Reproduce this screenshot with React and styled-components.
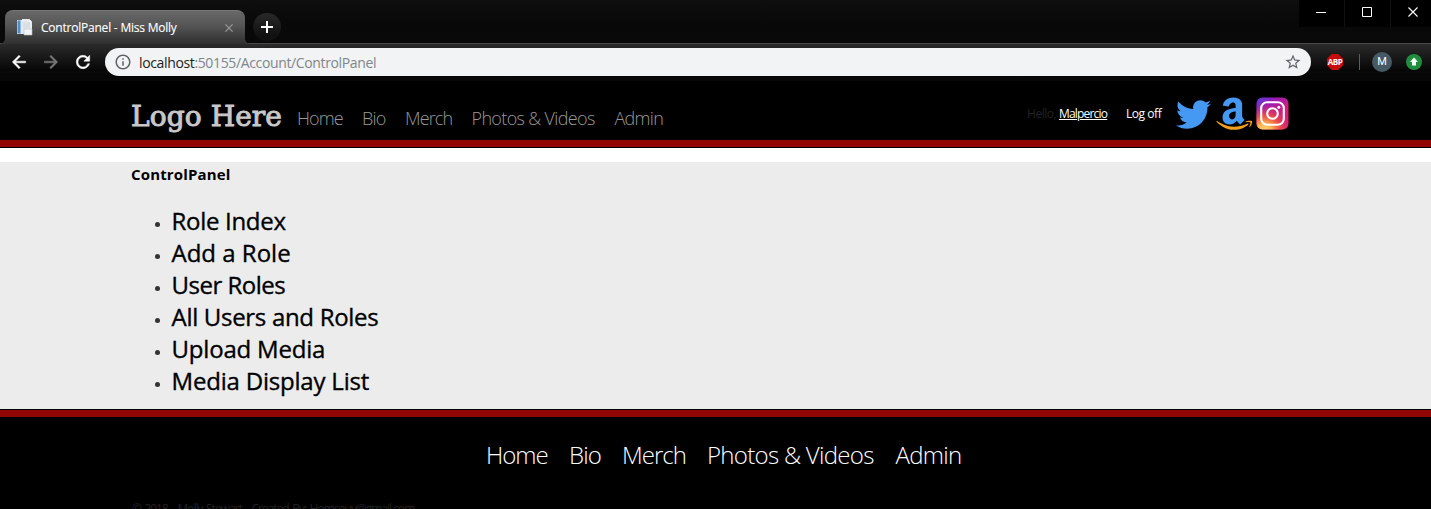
import React from "react";
import styled, { createGlobalStyle } from "styled-components";
import { FaTwitter } from "react-icons/fa";
import { MdArrowBack, MdArrowForward, MdRefresh, MdInfoOutline, MdStarBorder } from "react-icons/md";

const Global = createGlobalStyle`
  * { box-sizing: border-box; }
  html, body { margin: 0; background: #000; overflow: hidden; }
  body { font-family: "Open Sans", "Noto Sans", sans-serif; }
  svg { display: block; flex: none; }
`;

const Window = styled.div`
  width: 100%;
  height: 509px;
  overflow: hidden;
  background: #000;
`;

const TitleBar = styled.div`
  display: flex;
  height: 43px;
  background: linear-gradient(#0e0e0e, #080808 60%, #090909);
`;

const Tab = styled.div`
  position: relative;
  display: flex;
  align-items: center;
  width: 240px;
  height: 34px;
  margin: 10px 0 0 5px;
  padding: 0 12px 0 11px;
  border-top: 1px solid #777;
  border-radius: 8px 8px 0 0;
  background: linear-gradient(#686868, #555 45%, #3c3c3c 80%, #303030);
  color: #fff;

  /* curved feet that join the tab to the toolbar */
  &::before, &::after {
    content: "";
    position: absolute;
    bottom: 0;
    width: 5px;
    height: 5px;
  }
  &::before {
    left: -5px;
    background: radial-gradient(circle at 0 0, transparent 4.5px, #353535 5px);
  }
  &::after {
    right: -5px;
    background: radial-gradient(circle at 100% 0, transparent 4.5px, #353535 5px);
  }
`;

const TabTitle = styled.span`
  flex: 1;
  margin-left: 8px;
  font-size: 12px;
  white-space: nowrap;
  letter-spacing: ${(p) => p.$track}px;
  -webkit-text-stroke: 0.1px #fff;
`;

const NewTab = styled.div`
  display: grid;
  place-items: center;
  width: 28px;
  height: 28px;
  margin: 13px 0 0 8px;
  border-radius: 50%;
  background: linear-gradient(#292929, #111 80%);
`;

const Controls = styled.div`
  display: flex;
  gap: 1px;
  height: 27px;
  margin-left: auto;
  background: #111;
`;

const Control = styled.div`
  display: flex;
  align-items: center;
  width: ${(p) => p.$w || 45}px;
  padding: 0 0 3px 17px;
  background: #000;
`;

const Toolbar = styled.div`
  display: flex;
  align-items: center;
  height: 38px;
  padding: 0 9px 1px;
  border-top: 1px solid #484848;
  background: linear-gradient(#2b2b2b, #1b1b1b 30%, #050505 74%, #101010 75%, #060606 79%, #080808);
`;

const ToolIcon = styled.div`
  display: flex;
  width: 32px;
  color: ${(p) => p.$color};
  font-size: 20px;
  path:last-child { stroke: currentColor; stroke-width: 0.6; }
  path[fill="none"] { stroke: none; }
`;

const AddressBar = styled.div`
  display: flex;
  align-items: center;
  width: 1206px;
  height: 28px;
  padding: 0 9px;
  border-radius: 14px;
  background: #f1f3f4;
  color: #5f6368;
  font-size: 18px;
`;

const Url = styled.span`
  flex: 1;
  margin-left: 7px;
  color: #80868b;
  font-size: 14px;
  letter-spacing: ${(p) => p.$track}px;
  b { color: #222; font-weight: 400; }
`;

const AdBlock = styled.div`
  display: grid;
  place-items: center;
  width: 16px;
  height: 16px;
  margin-left: 16px;
  background: #c70d0a;
  clip-path: polygon(30% 0, 70% 0, 100% 30%, 100% 70%, 70% 100%, 30% 100%, 0 70%, 0 30%);
  color: #fff;
  font: 700 8px/16px "Open Sans", sans-serif;
  letter-spacing: -0.5px;
`;

const Divider = styled.div`
  width: 1px;
  height: 16px;
  margin-left: 16px;
  background: #5c5c5c;
`;

const Round = styled.div`
  display: grid;
  place-items: center;
  width: ${(p) => p.$size}px;
  height: ${(p) => p.$size}px;
  margin-left: ${(p) => p.$gap}px;
  border-radius: 50%;
  background: ${(p) => p.$bg};
  color: #fff;
  font: 400 11px/20px Roboto, sans-serif;
`;

const Header = styled.header`
  display: flex;
  height: 67px;
  padding-left: 131px;
  border-bottom: 1px solid #000;
  background: linear-gradient(#000 59px, #910504 59px);
`;

const Logo = styled.div`
  width: 166px;
  padding-top: 17px;
  color: #c8c8c8;
  font: 400 28px/37px "DejaVu Serif", serif;
  letter-spacing: ${(p) => p.$track}px;
  white-space: nowrap;
  -webkit-text-stroke: 1px #c8c8c8;
`;

const Nav = styled.nav`
  display: flex;
  font-weight: 300;
  white-space: nowrap;
`;

const TopNav = styled(Nav)`
  width: 730px;
  padding-top: 24px;
  color: #999;
  font-size: 18px;
  line-height: 26px;
`;

const NavItem = styled.a`
  width: ${(p) => p.$w}px;
  letter-spacing: ${(p) => p.$track}px;
`;

const Account = styled.div`
  display: flex;
  width: 149px;
  padding-top: 24px;
  color: #fff;
  font-size: 12px;
  line-height: 18px;
  letter-spacing: ${(p) => p.$track}px;
  white-space: nowrap;
`;

const Greeting = styled.span`
  width: 99px;
  color: #222;
  a {
    color: #fff;
    letter-spacing: -0.8px;
    text-decoration: underline;
    text-underline-offset: 1px;
  }
`;

const Social = styled.div`
  display: flex;
  align-items: flex-start;
  gap: 4.5px;
  padding-top: 16px;
  color: #4599f3;
`;

const Main = styled.main`
  height: 261px;
  padding-left: 131px;
  border-top: 14px solid #fff;
  background: #ececec;
  color: #000;
`;

const Heading = styled.h1`
  margin: 0;
  padding-top: 2px;
  font-size: 15px;
  line-height: 20px;
  font-weight: 700;
  letter-spacing: ${(p) => p.$track}px;
`;

const List = styled.ul`
  margin: 20px 0 0;
  padding: 0;
  list-style: none;
`;

const Item = styled.li`
  display: flex;
  align-items: center;
  height: 32px;
  padding-left: 24px;
  font-size: 24px;
  letter-spacing: ${(p) => p.$track}px;
  -webkit-text-stroke: 0.35px #000;
  &::before {
    content: "";
    width: 5px;
    height: 5px;
    margin: 8px 11.5px 0 0;
    border-radius: 50%;
    background: #333;
  }
`;

const Footer = styled.footer`
  height: 100px;
  border-top: 1px solid #000;
  background: linear-gradient(#910504 7px, #000 7px);
`;

const FooterNav = styled(Nav)`
  height: 91px;
  padding: 28px 0 0 486px;
  color: #fff;
  font-size: 24px;
  line-height: 34px;
`;

const Copyright = styled.div`
  padding-left: 132px;
  color: #222;
  font-size: 12px;
  line-height: 16px;
  letter-spacing: ${(p) => p.$track}px;
  word-spacing: 1.3px;
`;

const PageIcon = () => (
  <svg width="17" height="17" viewBox="0 0 17 17">
    <path d="M1 1h9v14H1z" fill="#dfe9f4" />
    <path d="M1.5 1.5h3v13h-3z" fill="#4d8fcb" />
    <path d="M6 0h7l3 3v10H6z" fill="#e6ebf0" />
    <path d="M13 0v3h3z" fill="#fff" />
    <path d="M7 4h7M7 6h7M7 8h7" stroke="#cbd3da" />
    <path d="M8 10h8v6H8z" fill="#f4f6f8" stroke="#b5bec7" strokeWidth=".6" />
  </svg>
);

const Cross = ({ size, color, width }) => (
  <svg width={size} height={size} viewBox="0 0 10 10">
    <path d="M.5.5l9 9M9.5.5l-9 9" stroke={color} strokeWidth={width} />
  </svg>
);

const AmazonIcon = () => (
  <svg width="36" height="33" viewBox="0 0 36 33">
    <path
      transform="translate(-.3 -2) scale(.0775 .0795)"
      fill="#4599f3"
      d="M257.2 162.7c-48.7 1.8-169.5 15.5-169.5 117.5 0 109.5 138.3 114 183.5 43.2 6.5 10.2 35.4 37.5 45.3 46.8l56.8-56S341 288.9 341 261.4V114.3C341 89 316.5 32 228.7 32 140.7 32 94 87 94 136.3l73.5 6.8c16.3-49.5 54.2-49.5 54.2-49.5 40.7-.1 35.5 29.8 35.5 69.1zm0 86.8c0 80-84.2 68-84.2 17.2 0-47.2 50.5-56.7 84.2-57.8v40.6z"
    />
    <path
      transform="translate(-.2 -5.8) scale(.0825 .0805)"
      fill="#f5a01d"
      d="M393.2 413c-7.7 10-70 67-174.5 67S34.2 408.5 9.7 379c-6.8-7.7 1-11.3 5.5-8.3C88.5 415.2 203 488.5 387.7 401c7.5-3.7 13.3 2 5.5 12zm39.8 2.2c-6.5 15.8-16 26.8-21.2 31-5.5 4.5-9.5 2.7-6.5-3.8s19.3-46.5 12.7-55c-6.5-8.3-37-4.3-48-3.2-10.8 1-13 2-14-.3-2.3-5.7 21.7-15.5 37.5-17.5 15.7-1.8 41-.8 46 5.7 3.7 5.1 0 27.1-6.5 43.1z"
    />
  </svg>
);

const InstagramIcon = () => (
  <svg width="33" height="33" viewBox="0 0 33 33" fill="none">
    <defs>
      <linearGradient id="violet" x1="0" y1="0" x2="1" y2="1">
        <stop offset="0" stopColor="#5a3fdc" />
        <stop offset=".3" stopColor="#9a1bb8" />
        <stop offset=".7" stopColor="#d91d72" />
        <stop offset="1" stopColor="#cf2094" />
      </linearGradient>
      <radialGradient id="sun" cx=".25" cy="1.05" r=".9">
        <stop offset="0" stopColor="#ffdc7a" />
        <stop offset=".25" stopColor="#fcb64d" />
        <stop offset=".55" stopColor="#f2563c" stopOpacity=".85" />
        <stop offset="1" stopColor="#d91d72" stopOpacity="0" />
      </radialGradient>
    </defs>
    <rect x=".5" y=".5" width="32" height="32" rx="6" fill="url(#violet)" />
    <rect x=".5" y=".5" width="32" height="32" rx="6" fill="url(#sun)" />
    <rect x="5.2" y="5.2" width="22.6" height="22.6" rx="6" stroke="#fff" strokeWidth="2.1" />
    <circle cx="16.5" cy="16.5" r="5.3" stroke="#fff" strokeWidth="2.1" />
    <circle cx="22.8" cy="10.2" r="1.5" fill="#fff" />
  </svg>
);

const topLinks = [
  ["Home", 65, -0.9], ["Bio", 43, -0.8], ["Merch", 66.5, -0.9], ["Photos & Videos", 143, -0.65], ["Admin", 60, -0.7],
];
const footerLinks = [
  ["Home", 83, -1], ["Bio", 53, -0.8], ["Merch", 85, -1], ["Photos & Videos", 188.5, -0.7], ["Admin", 80, -0.7],
];
const actions = [
  ["Role Index", -0.3], ["Add a Role", 0], ["User Roles", -0.5],
  ["All Users and Roles", -0.3], ["Upload Media", -0.2], ["Media Display List", -0.2],
];

export default function App() {
  return (
    <Window>
      <Global />
      <TitleBar>
        <Tab>
          <PageIcon />
          <TabTitle $track={-0.22}>ControlPanel - Miss Molly</TabTitle>
          <Cross size={8} color="#999" width={1.5} />
        </Tab>
        <NewTab>
          <svg width="12" height="12"><path d="M6 0v12M0 6h12" stroke="#fff" strokeWidth="2" /></svg>
        </NewTab>
        <Controls>
          <Control><svg width="10" height="10"><path d="M0 5.5h10" stroke="#fff" /></svg></Control>
          <Control><svg width="10" height="10"><path d="M.5.5h9v9h-9z" fill="none" stroke="#fff" /></svg></Control>
          <Control $w={40}><Cross size={10} color="#fff" width={1.1} /></Control>
        </Controls>
      </TitleBar>
      <Toolbar>
        <ToolIcon $color="#fff"><MdArrowBack /></ToolIcon>
        <ToolIcon $color="#777"><MdArrowForward /></ToolIcon>
        <ToolIcon $color="#fff"><MdRefresh /></ToolIcon>
        <AddressBar>
          <MdInfoOutline />
          <Url $track={-0.36}><b>localhost</b>:50155/Account/ControlPanel</Url>
          <MdStarBorder />
        </AddressBar>
        <AdBlock>ABP</AdBlock>
        <Divider />
        <Round $size={20} $gap={12} $bg="#455a64">M</Round>
        <Round $size={16} $gap={14} $bg="#1e8e3e">
          <svg width="10" height="10"><path d="M5 .5l4 4.5H7v3.5H3V5H1z" fill="#fff" /></svg>
        </Round>
      </Toolbar>
      <Header>
        <Logo $track={0.1}>Logo Here</Logo>
        <TopNav>
          {topLinks.map(([label, w, track]) => <NavItem key={label} $w={w} $track={track}>{label}</NavItem>)}
        </TopNav>
        <Account $track={-0.45}>
          <Greeting>Hello, <a>Malpercio</a>!</Greeting>
          <a>Log off</a>
        </Account>
        <Social>
          <FaTwitter size={35} />
          <AmazonIcon />
          <InstagramIcon />
        </Social>
      </Header>
      <Main>
        <Heading $track={0.15}>ControlPanel</Heading>
        <List>
          {actions.map(([label, track]) => <Item key={label} $track={track}>{label}</Item>)}
        </List>
      </Main>
      <Footer>
        <FooterNav>
          {footerLinks.map(([label, w, track]) => <NavItem key={label} $w={w} $track={track}>{label}</NavItem>)}
        </FooterNav>
        <Copyright $track={-1}>© 2018 - Molly Stewart - Created By: Homsouy@gmail.com</Copyright>
      </Footer>
    </Window>
  );
}
